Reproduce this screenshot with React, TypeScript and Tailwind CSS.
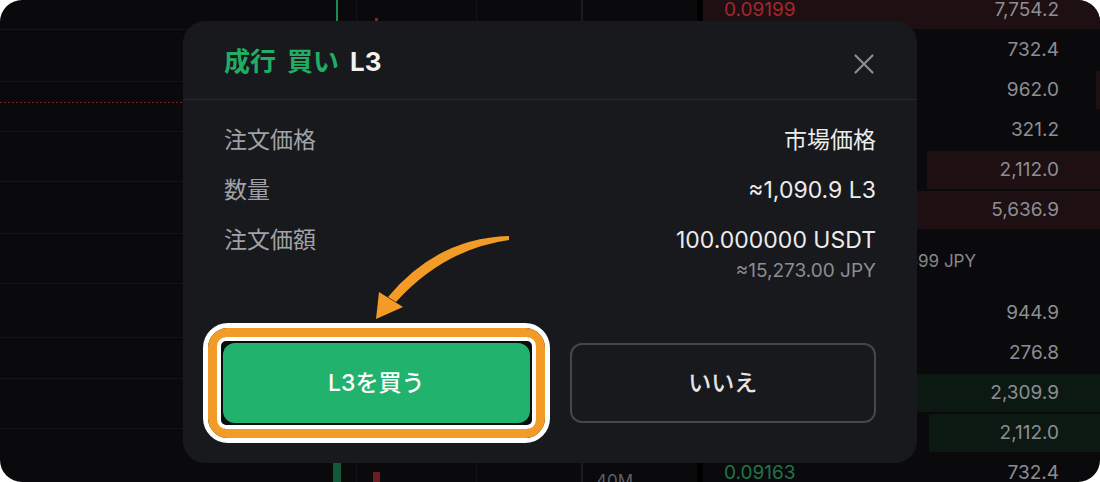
import { X } from 'lucide-react';

const asks = [
  { price: '0.09199', size: '7,754.2', depth: 100 },
  { price: '0.09198', size: '732.4', depth: 0 },
  { price: '0.09197', size: '962.0', depth: 1 },
  { price: '0.09196', size: '321.2', depth: 0 },
  { price: '0.09195', size: '2,112.0', depth: 43.6 },
  { price: '0.09194', size: '5,636.9', depth: 100 },
];

const bids = [
  { price: '0.09167', size: '944.9', depth: 0 },
  { price: '0.09166', size: '276.8', depth: 0 },
  { price: '0.09165', size: '2,309.9', depth: 100 },
  { price: '0.09164', size: '2,112.0', depth: 43 },
  { price: '0.09163', size: '732.4', depth: 0 },
];

// horizontal grid rows of the chart (heights between lines)
const gridRows = ['h-[52px]', 'h-[50px]', 'h-[50px]', 'h-[52px]', 'h-[50px]', 'h-[54px]', 'h-[41px]', 'h-[50px]'];

export default function App() {
  return (
    <div className="h-[482px] w-[1100px] bg-white font-['Inter','Noto_Sans_CJK_JP',sans-serif]">
      <div className="relative flex h-full overflow-hidden rounded-[22px] bg-[#0a0a0c]">
        <Chart />
        <div className="w-[6px] bg-black" />
        <OrderBook />
        <OrderModal />
        <svg
          className="pointer-events-none absolute inset-0"
          width="1100"
          height="482"
          viewBox="0 0 1100 482"
        >
          <path d="M509,236 Q437,238 388,297 L396,302 Q444,249 509,240 Z" fill="#f29b26" />
          <path d="M376,319 L379,292 L403,307 Z" fill="#f29b26" />
        </svg>
      </div>
    </div>
  );
}

function Chart() {
  return (
    <div className="relative flex w-[697px] flex-col">
      <div className="h-[29px] shrink-0" />
      {gridRows.map((h, i) => (
        <div key={i} className={`${h} shrink-0 border-t border-[#141518]`} />
      ))}
      <div className="flex-1 border-t border-[#141518]" />

      {/* vertical grid + axis */}
      <div className="absolute inset-0 flex">
        <div className="w-[357px] border-r border-[#141518]" />
        <div className="w-[120px] border-r border-[#141518]" />
        <div className="w-[106px] border-r-2 border-[#1c1d21]" />
        <div className="flex flex-1 flex-col overflow-hidden pl-[13px]">
          <span className="mt-auto -mb-[9px] text-[17px] leading-[20px] text-[#5c5f65]">40M</span>
        </div>
      </div>

      <svg className="pointer-events-none absolute inset-0" width="697" height="482" viewBox="0 0 697 482">
        <line x1="0" y1="102.5" x2="583" y2="102.5" stroke="#7c1f24" strokeWidth="1" strokeDasharray="2 2" />
        <rect x="336" y="0" width="2" height="22" fill="#1f8a4f" />
        <rect x="375" y="18" width="3" height="4" fill="#8a2328" />
        <rect x="333" y="463" width="8" height="19" fill="#16583a" />
        <rect x="373" y="472" width="7" height="10" fill="#6a1d20" />
      </svg>
    </div>
  );
}

function BookRow({
  price,
  size,
  depth,
  side,
  showPrice,
}: {
  price: string;
  size: string;
  depth: number;
  side: 'ask' | 'bid';
  showPrice?: boolean;
}) {
  return (
    <div className="relative flex h-[40px] shrink-0 items-center justify-between pl-[21px] pr-[41px] text-[19px]">
      {depth > 0 && (
        <div
          className={`absolute inset-y-[1px] right-0 ${side === 'ask' ? 'bg-[#1d0f12]' : 'bg-[#0c1912]'}`}
          style={{ width: `${depth}%` }}
        />
      )}
      <span className={`relative ${side === 'ask' ? 'text-[#a3272e]' : 'text-[#1d7548]'} ${showPrice ? '' : 'opacity-0'}`}>
        {price}
      </span>
      <span className="relative text-[#8c8e93]">{size}</span>
    </div>
  );
}

function OrderBook() {
  return (
    <div className="-mt-[10px] flex flex-1 flex-col">
      {asks.map((r, i) => (
        <BookRow key={r.size + i} {...r} side="ask" showPrice={i === 0} />
      ))}
      <div className="flex h-[63px] shrink-0 items-center justify-end pr-[124px] text-[17px] text-[#85878c]">
        ≈14.0599 JPY
      </div>
      {bids.map((r, i) => (
        <BookRow key={r.size + i} {...r} side="bid" showPrice={i === bids.length - 1} />
      ))}
    </div>
  );
}

function OrderModal() {
  const rows = [
    { label: '注文価格', value: '市場価格' },
    { label: '数量', value: '≈1,090.9 L3' },
    { label: '注文価額', value: '100.000000 USDT', sub: '≈15,273.00 JPY' },
  ];

  return (
    <div className="absolute left-[183px] top-[21px] flex h-[442px] w-[734px] flex-col rounded-[22px] bg-[#18191d]">
      <div className="flex h-[79px] shrink-0 items-center justify-between border-b border-[#27282d] px-[41px]">
        <div className="mt-[2px] flex items-center gap-[11px] text-[26px] font-bold">
          <span className="text-[#20ad64]">成行</span>
          <span className="text-[#20ad64]">買い</span>
          <span className="text-[#f2f2f2]">L3</span>
        </div>
        <X className="-mr-[5px] mt-[8px] h-[34px] w-[34px] text-[#8d8e93]" strokeWidth={1.5} />
      </div>

      <div className="flex flex-col gap-[18px] px-[41px] pt-[24px]">
        {rows.map((row) => (
          <div key={row.label} className="flex justify-between">
            <span className="text-[23px] leading-[32px] text-[#a0a2a7]">{row.label}</span>
            <div className="flex flex-col items-end">
              <span className="text-[23px] leading-[32px] text-[#ececec]">{row.value}</span>
              {row.sub && <span className="mt-[3px] text-[19px] leading-[24px] text-[#8b8d92]">{row.sub}</span>}
            </div>
          </div>
        ))}
      </div>

      <div className="mt-auto grid grid-cols-2 gap-[40px] px-[40px] pb-[40px] pr-[41px]">
        <div className="-m-[20px] rounded-[25px] border-[5px] border-white">
          <div className="rounded-[20px] border-[9px] border-[#f29b26]">
            <div className="rounded-[9px] border-[4px] border-white bg-[#0b0c0d] p-[2px]">
              <button className="flex h-[80px] w-full items-center justify-center rounded-[12px] bg-[#21b26d] text-[23px] font-medium text-white">
                L3を買う
              </button>
            </div>
          </div>
        </div>
        <button className="flex h-[80px] items-center justify-center rounded-[12px] border-2 border-[#45474c] text-[23px] font-medium text-[#e6e6e6]">
          いいえ
        </button>
      </div>
    </div>
  );
}
